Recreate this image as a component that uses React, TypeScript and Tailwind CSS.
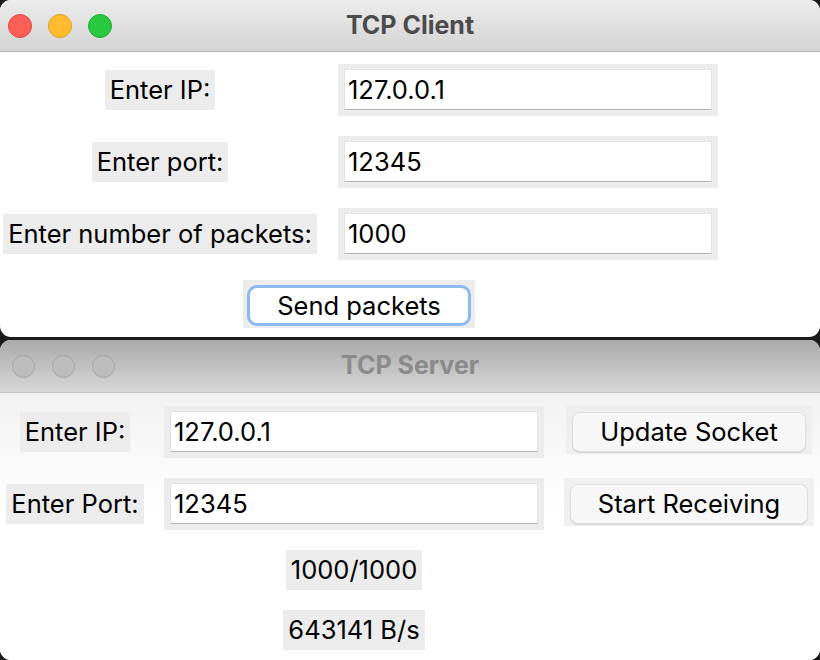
import React from "react";

const font = { fontFamily: "Inter, 'Noto Sans', sans-serif" };

function Lights({ active }: { active: boolean }) {
  if (active) {
    return (
      <div className="flex gap-[16px] ml-[8px]">
        <span className="w-[24px] h-[24px] rounded-full bg-[#fe5f57] border border-[#e2463f]" />
        <span className="w-[24px] h-[24px] rounded-full bg-[#febc2e] border border-[#dfa023]" />
        <span className="w-[24px] h-[24px] rounded-full bg-[#28c840] border border-[#1dad2b]" />
      </div>
    );
  }
  return (
    <div className="flex gap-[17px] ml-[12px]">
      <span className="w-[23px] h-[23px] rounded-full bg-[#bdbdbd] border border-[#a4a4a4]" />
      <span className="w-[23px] h-[23px] rounded-full bg-[#bdbdbd] border border-[#a4a4a4]" />
      <span className="w-[23px] h-[23px] rounded-full bg-[#bdbdbd] border border-[#a4a4a4]" />
    </div>
  );
}

function Label({ text }: { text: string }) {
  return (
    <div className="justify-self-center self-center h-[40px] px-[5px] flex items-center bg-[#ececec] text-[25.5px] text-black leading-none">
      {text}
    </div>
  );
}

function Entry({ value }: { value: string }) {
  return (
    <div className="h-[52px] bg-[#ececec] pt-[5px] pb-[6px] px-[6px]">
      <div className="h-full bg-white border border-[#e2e2e2] border-b-[#b4b4b4] flex items-center pl-[3px] text-[25.5px] text-black leading-none">
        {value}
      </div>
    </div>
  );
}

function ServerButton({ text }: { text: string }) {
  return (
    <div className="h-[48px] bg-[#ececec]/80 pt-[6px] pb-[2px] px-[6px] flex">
      <div className="flex-1 rounded-[8px] bg-[#f7f7f7] border border-[#dedede] shadow-[0_1px_1px_rgba(0,0,0,0.12)] flex items-center justify-center text-[25.5px] text-black leading-none">
        {text}
      </div>
    </div>
  );
}

export default function App() {
  return (
    <div className="w-[820px] h-[660px] bg-[#1b1b1b] flex flex-col overflow-hidden" style={font}>
      {/* client window */}
      <div className="h-[337px] shrink-0 rounded-[11px] bg-white overflow-hidden flex flex-col">
        <div className="relative h-[52px] shrink-0 bg-gradient-to-b from-[#ececec] to-[#d4d4d4] border-b border-[#b3b3b3] flex items-center">
          <Lights active />
          <div className="absolute inset-0 flex items-center justify-center text-[25px] font-bold text-[#4b4b4b]">
            TCP Client
          </div>
        </div>
        <div className="grid grid-cols-[320px_380px] gap-x-[18px] gap-y-[20px] pt-[12px]">
          <Label text="Enter IP:" />
          <Entry value="127.0.0.1" />
          <Label text="Enter port:" />
          <Entry value="12345" />
          <Label text="Enter number of packets:" />
          <Entry value="1000" />
          <div className="col-span-2 justify-self-center w-[232px] h-[48px] bg-[#ececec] px-[4px] pt-[5px] pb-[2px]">
            <div className="h-full rounded-[10px] border-[3px] border-[#8bb9f1] bg-white flex items-center justify-center text-[25.5px] text-black leading-none">
              Send packets
            </div>
          </div>
        </div>
      </div>

      {/* server window */}
      <div className="mt-[3px] flex-1 rounded-[11px] bg-white overflow-hidden flex flex-col">
        <div className="relative h-[53px] shrink-0 bg-gradient-to-b from-[#a9a9a9] to-[#d8d8d8] border-b border-[#c2c2c2] flex items-center">
          <Lights active={false} />
          <div className="absolute inset-0 flex items-center justify-center text-[25px] font-bold text-[#8a8a8a]">
            TCP Server
          </div>
        </div>
        <div className="flex-1 bg-gradient-to-b from-[#f2f2f2] to-white to-[45%]">
          <div className="grid grid-cols-[150px_380px_256px] gap-x-[14px] gap-y-[20px] pt-[13px]">
            <Label text="Enter IP:" />
            <Entry value="127.0.0.1" />
            <div className="pl-[8px] pr-[2px]">
              <ServerButton text="Update Socket" />
            </div>
            <Label text="Enter Port:" />
            <Entry value="12345" />
            <div className="pl-[6px]">
              <ServerButton text="Start Receiving" />
            </div>
            <div />
            <Label text="1000/1000" />
            <div />
            <div />
            <Label text="643141 B/s" />
            <div />
          </div>
        </div>
      </div>
    </div>
  );
}
